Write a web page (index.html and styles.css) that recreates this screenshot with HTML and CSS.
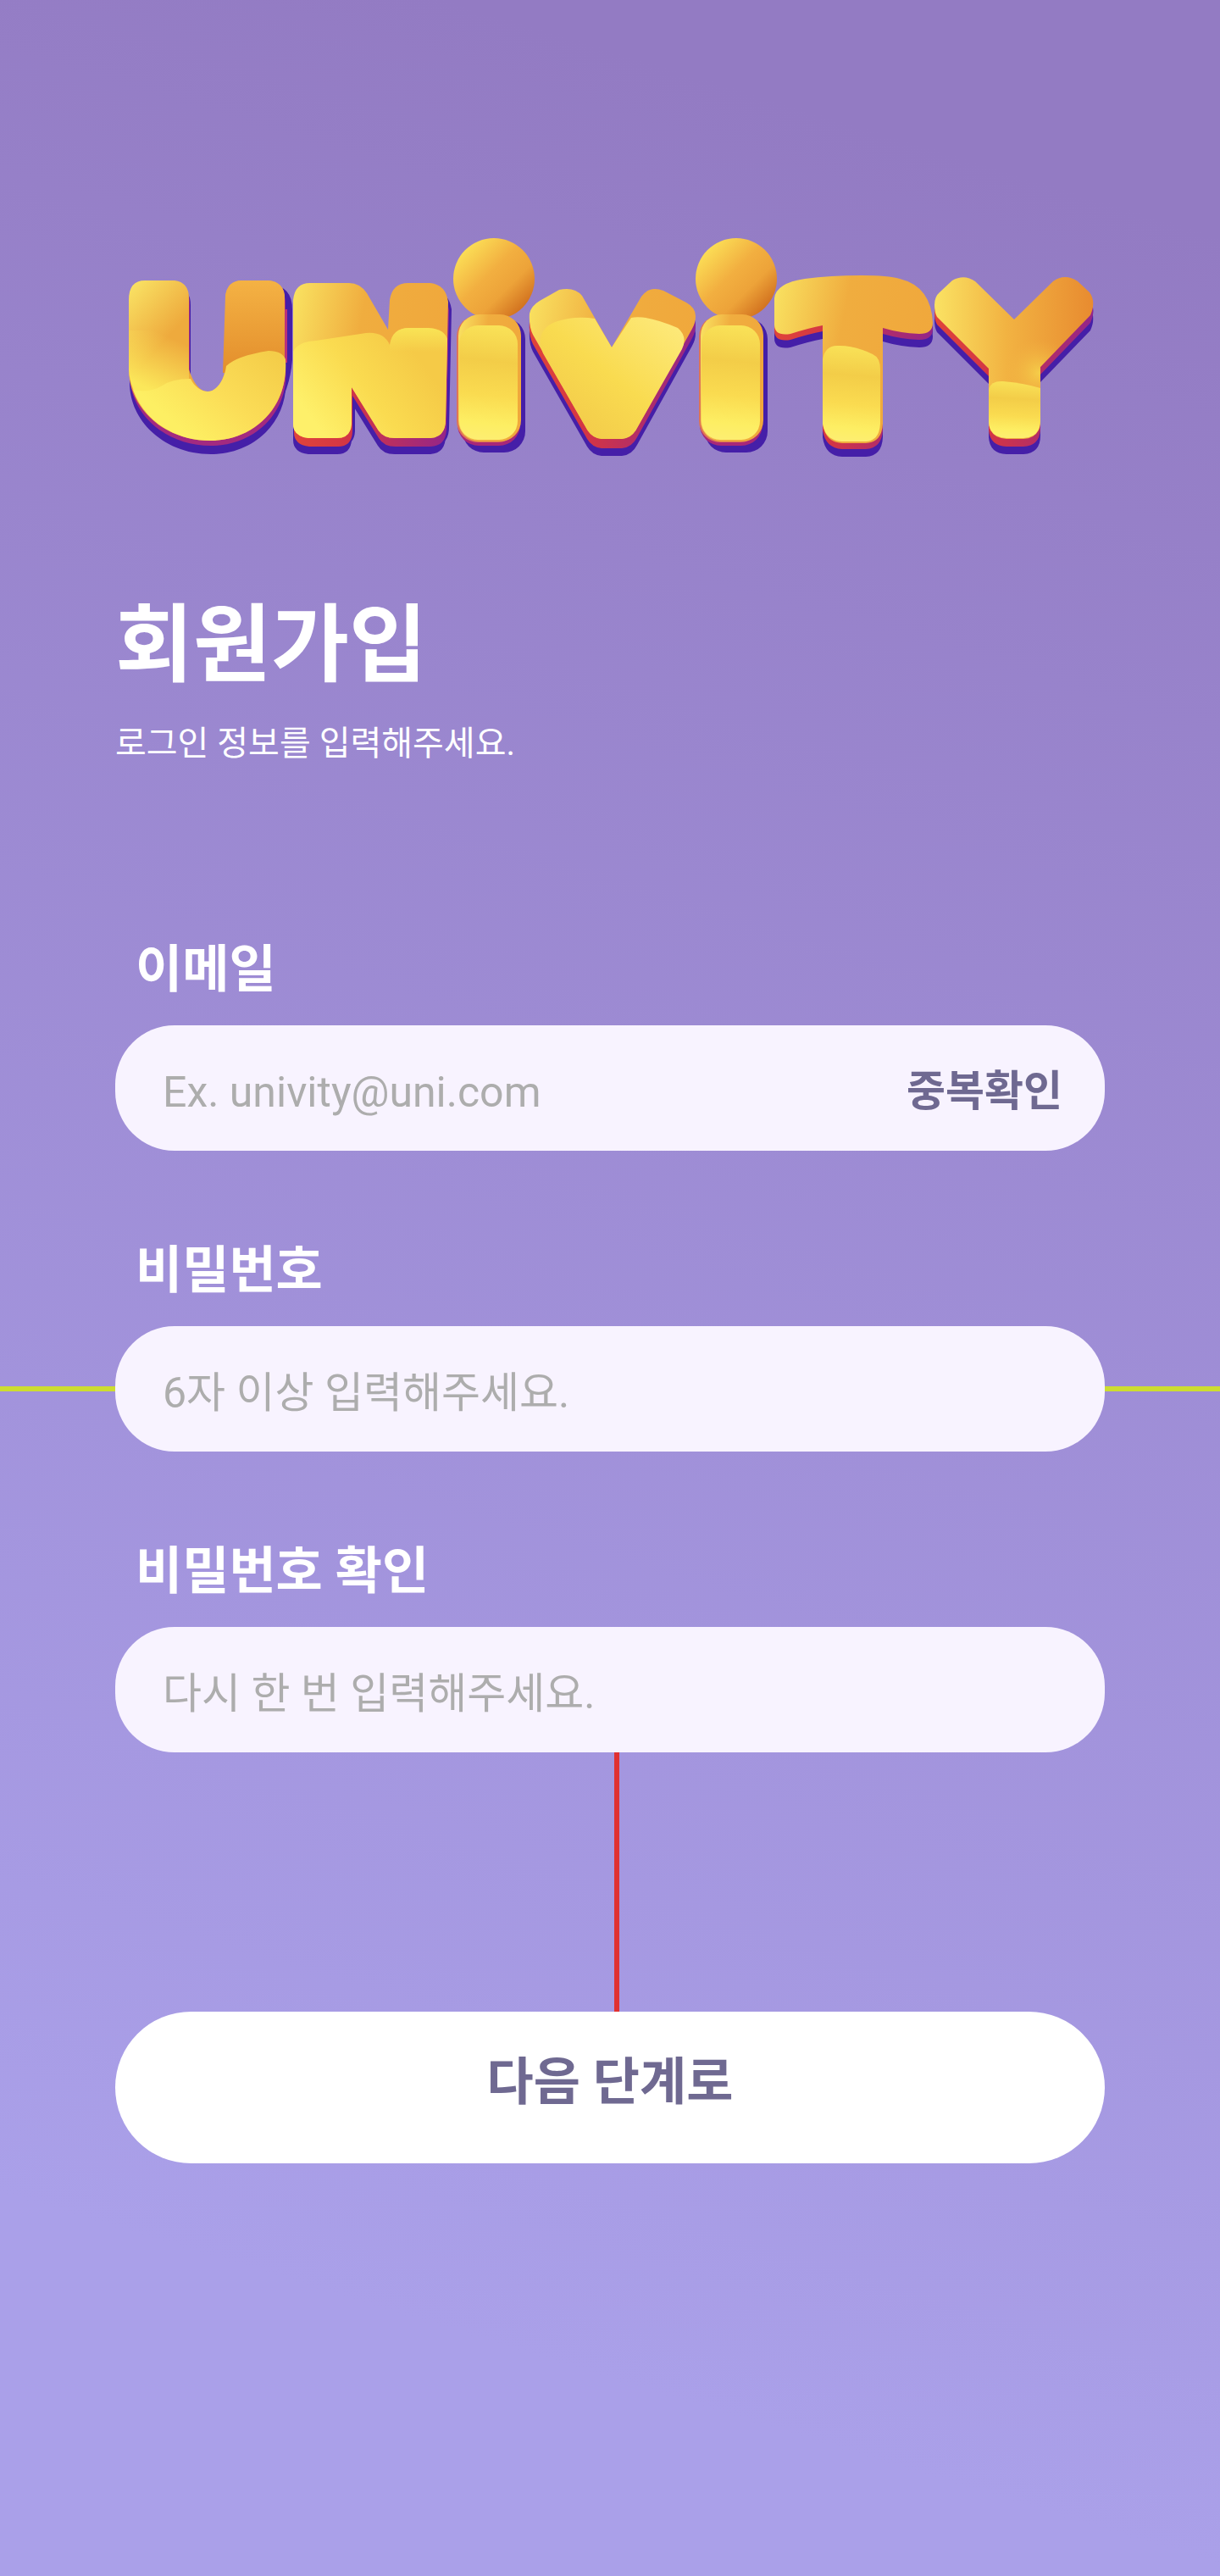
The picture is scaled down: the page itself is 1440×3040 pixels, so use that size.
FILE: index.html
```html
<!DOCTYPE html>
<html lang="ko">
<head>
<meta charset="utf-8">
<meta name="viewport" content="width=device-width, initial-scale=1">
<title>UNIVITY 회원가입</title>
<link rel="stylesheet" href="styles.css">
</head>
<body>
<main class="page">
  <svg class="logo" viewBox="136 280 1168 260" role="img" aria-label="UNIVITY">
    <defs>
      <linearGradient id="body" x1="0" y1="0.1" x2="1" y2="0.3">
        <stop offset="0" stop-color="#f9e160"/><stop offset="0.45" stop-color="#f0ad3f"/><stop offset="1" stop-color="#f0a83c"/>
      </linearGradient>
      <linearGradient id="bodyU" gradientUnits="userSpaceOnUse" x1="155" y1="335" x2="210" y2="385">
        <stop offset="0" stop-color="#f9e264"/><stop offset="1" stop-color="#eeaa3d"/>
      </linearGradient>
      <linearGradient id="stemU" x1="0" y1="0" x2="0" y2="1">
        <stop offset="0" stop-color="#f4b244"/><stop offset="1" stop-color="#e38e2c"/>
      </linearGradient>
      <linearGradient id="bowlU" gradientUnits="userSpaceOnUse" x1="205" y1="400" x2="178" y2="460">
        <stop offset="0" stop-color="#fbe75a" stop-opacity="0"/><stop offset="1" stop-color="#fbe75a"/>
      </linearGradient>
      <linearGradient id="bodyY" x1="0" y1="0.1" x2="1" y2="0.1">
        <stop offset="0" stop-color="#fae263"/><stop offset="0.45" stop-color="#f2b342"/><stop offset="1" stop-color="#e88b30"/>
      </linearGradient>
      <radialGradient id="glowY" gradientUnits="userSpaceOnUse" cx="1226" cy="440" r="40">
        <stop offset="0" stop-color="#f6d14b" stop-opacity="0.9"/><stop offset="1" stop-color="#f2b342" stop-opacity="0"/>
      </radialGradient>
      <linearGradient id="light" x1="0.35" y1="0" x2="0.3" y2="1">
        <stop offset="0" stop-color="#f9e157"/><stop offset="0.3" stop-color="#f3cd48"/><stop offset="0.6" stop-color="#fadb50"/><stop offset="0.85" stop-color="#fdee63"/><stop offset="1" stop-color="#fdee72"/>
      </linearGradient>
      <linearGradient id="lightU" gradientUnits="userSpaceOnUse" x1="320" y1="415" x2="230" y2="520">
        <stop offset="0" stop-color="#f4cd49"/><stop offset="0.55" stop-color="#fbdd57"/><stop offset="1" stop-color="#fdef63"/>
      </linearGradient>
      <linearGradient id="lightN" gradientUnits="userSpaceOnUse" x1="500" y1="430" x2="385" y2="517">
        <stop offset="0" stop-color="#f5ca47"/><stop offset="0.5" stop-color="#fadb50"/><stop offset="1" stop-color="#fef06a"/>
      </linearGradient>
      <linearGradient id="topN" gradientUnits="userSpaceOnUse" x1="490" y1="388" x2="490" y2="415">
        <stop offset="0" stop-color="#f9e355"/><stop offset="1" stop-color="#f9e355" stop-opacity="0"/>
      </linearGradient>
      <linearGradient id="lightV" gradientUnits="userSpaceOnUse" x1="790" y1="375" x2="690" y2="500">
        <stop offset="0" stop-color="#fde97a"/><stop offset="0.6" stop-color="#f9db50"/><stop offset="1" stop-color="#f4ce4b"/>
      </linearGradient>
      <linearGradient id="ball" x1="0.05" y1="0.25" x2="0.75" y2="0.95">
        <stop offset="0" stop-color="#fbdc55"/><stop offset="0.42" stop-color="#f2af40"/><stop offset="0.7" stop-color="#eda339"/><stop offset="1" stop-color="#d37420"/>
      </linearGradient>
      <linearGradient id="rim" x1="0" y1="0" x2="1" y2="0">
        <stop offset="0" stop-color="#e0443a"/><stop offset="0.35" stop-color="#d33545"/><stop offset="1" stop-color="#93258a"/>
      </linearGradient>
      <path id="u" d="M152 354 Q152 331 171 331 H206 Q223 333 223 352 V436 C228 452 236 462 245 462 C257 462 266 448 266 428 V350 Q268 331 286 331 H317 Q336 333 336 352 V428 C341 480 300 520 248 520 C192 520 152 480 152 436Z"/>
      <path id="n" d="M346 354 Q348 334 366 334 H412 Q425 334 433 346 L458 389 L460 354 Q463 334 482 334 H508 Q526 336 529 356 L526 495 Q526 517 506 517 H466 Q452 517 446 507 L415 457 V500 Q414 517 398 517 H364 Q346 515 346 500Z"/>
      <rect id="stem" x="541" y="371" width="74" height="150" rx="25"/>
      <path id="v" d="M625 370 Q627 361 637 355 L660 342 Q678 338 687 349 L722 410 L757 350 Q766 337 783 343 L810 357 Q821 363 821 373 Q821 381 817 388 L752 505 Q746 517 734 518 H710 Q699 517 693 507 L629 395 Q624 385 625 370Z"/>
      <path id="t" d="M914 352 Q916 334 950 329 Q980 325 1017 325 Q1048 325 1062 329 Q1099 338 1101 381 Q1101 394 1085 394 Q1062 393 1042 387 V500 Q1041 522 1022 523 H994 Q974 522 971 500 V384 Q955 387 933 394 Q914 397 914 383Z"/>
      <path id="y" d="M1103 360 Q1103 350 1109 345 L1124 331 Q1138 323 1151 332 L1197 377 L1243 332 Q1257 322 1272 332 L1286 345 Q1294 356 1287 372 L1228 433 V496 Q1228 517 1208 518 H1188 Q1168 517 1167 498 V435 L1106 374 Q1103 369 1103 360Z"/>
      <g id="letter-i">
        <use href="#stem" x="5" y="13" fill="#451fa8"/><use href="#stem" x="5" y="4" fill="#451fa8"/>
        <use href="#stem" x="-1" y="5" fill="#a92878"/>
        <use href="#stem" x="-2" y="1" fill="#df7654"/>
        <circle cx="583" cy="329" r="48" fill="url(#ball)"/>
        <use href="#stem" fill="url(#body)"/>
        <rect x="542" y="384" width="69" height="135" rx="22" fill="url(#light)"/>
      </g>
    </defs>
    <g fill="#451fa8">
      <use href="#u" x="2" y="8"/><use href="#u" x="1" y="16"/>
      <path d="M320 336 Q345 338 345 365 V425 Q342 460 325 485 H300Z"/>
      <use href="#n" x="4" y="9"/><use href="#n" x="0" y="19"/>
      <use href="#v" y="20"/><use href="#v" y="10"/>
      <use href="#t" y="16"/><use href="#t" y="8"/>
      <use href="#y" y="18"/><use href="#y" y="9"/>
    </g>
    <use href="#u" x="1" y="6" fill="#a32a80"/>
    <path d="M330 365 H339 V428 H330Z" fill="#bb3279"/>
    <g fill="url(#rim)">
      <use href="#n" x="1" y="10"/>
      <use href="#v" y="11"/>
      <use href="#t" y="7"/>
      <use href="#y" y="9"/>
    </g>
    <use href="#u" fill="url(#bodyU)"/>
    <path d="M266 350 Q268 331 286 331 H317 Q336 333 336 352 V440 H263Z" fill="url(#stemU)"/>
    <path d="M152 390 H223 V470 H162 Q152 450 152 436Z" fill="url(#bowlU)"/>
    <path d="M190 456 Q202 447 225 447 C229 456 238 462 245 462 C256 462 265 448 267 432 Q279 420 317 414 Q333 414 337 424 C341 480 300 520 248 520 C205 520 170 496 157 460 Q176 464 190 456Z" fill="url(#lightU)"/>
    <use href="#n" fill="url(#body)"/>
    <path d="M346 415 Q352 403 373 402 L432 393 Q453 391 460 407 Q463 387 483 387 H505 Q524 388 528 400 L526 495 Q526 517 506 517 H466 Q452 517 446 507 L415 457 V500 Q414 517 398 517 H364 Q346 515 346 500Z" fill="url(#lightN)"/>
    <path d="M460 407 Q463 387 483 387 H505 Q524 388 528 400 V416 H460Z" fill="url(#topN)"/>
    <use href="#letter-i"/>
    <use href="#v" fill="url(#body)"/>
    <path d="M638 400 Q640 386 655 380 Q678 372 702 376 L722 410 L745 375 Q762 371 800 387 Q812 397 805 412 L752 505 Q746 517 734 518 H710 Q699 517 693 507 L641 417 Q637 408 638 400Z" fill="url(#lightV)"/>
    <use href="#letter-i" x="286"/>
    <use href="#t" fill="url(#body)"/>
    <path d="M971 424 Q974 408 988 408 Q1007 407 1030 418 Q1039 422 1039 436 V500 Q1038 520 1022 521 H994 Q974 520 971 500Z" fill="url(#light)"/>
    <use href="#y" fill="url(#bodyY)"/>
    <path d="M1167 400 H1260 L1228 433 V465 H1167Z" fill="url(#glowY)"/>
    <path d="M1167 459 Q1170 449 1184 450 Q1208 452 1228 458 V496 Q1228 516 1208 517 H1188 Q1168 516 1167 498Z" fill="url(#light)"/>
  </svg>

  <header class="intro">
    <h1 class="title">회원가입</h1>
    <p class="subtitle">로그인 정보를 입력해주세요.</p>
  </header>

  <form class="form">
    <div class="field">
      <label class="label" for="email">이메일</label>
      <div class="control">
        <input class="input" id="email" type="email" placeholder="Ex. univity@uni.com">
        <button class="check" type="button">중복확인</button>
      </div>
    </div>
    <div class="field">
      <label class="label" for="password">비밀번호</label>
      <div class="guide-row">
        <span class="guide-h"></span>
        <div class="control">
          <input class="input" id="password" type="password" placeholder="6자 이상 입력해주세요.">
        </div>
        <span class="guide-h"></span>
      </div>
    </div>
    <div class="field">
      <label class="label" for="confirm">비밀번호 확인</label>
      <div class="control">
        <input class="input" id="confirm" type="password" placeholder="다시 한 번 입력해주세요.">
      </div>
    </div>
    <div class="guide-v"></div>
    <button class="next" type="submit">다음 단계로</button>
  </form>
</main>
</body>
</html>
```
FILE: styles.css
```css
* {
  box-sizing: border-box;
}

body {
  margin: 0;
  font-family: Roboto, "Noto Sans CJK KR", sans-serif;
  color: #fff;
}

.page {
  --gutter: 136px;
  min-height: 100vh;
  padding: 280px var(--gutter);
  background: linear-gradient(197deg, #937bc3 8%, #aaa0e9 87%);
}

.logo {
  display: block;
  width: 100%;
}

.intro {
  margin-top: 172px;
}

.title {
  margin: 0;
  font-size: 100px;
  line-height: 100px;
  font-weight: 700;
}

.subtitle {
  margin: 46px 0 0;
  font-size: 40px;
  line-height: 40px;
}

.form {
  display: flex;
  flex-direction: column;
  margin-top: 217px;
}

.field + .field {
  margin-top: 112px;
}

.label {
  display: block;
  margin-bottom: 35px;
  padding-left: 24px;
  font-size: 60px;
  line-height: 60px;
  font-weight: 700;
}

.control {
  display: flex;
  align-items: center;
  flex: 1;
  min-width: 0;
  height: 148px;
  padding: 0 50px 0 56px;
  border-radius: 70px;
  background: #f8f3ff;
}

.input {
  flex: 1;
  min-width: 0;
  height: 100%;
  padding: 10px 0 0;
  border: 0;
  outline: 0;
  background: transparent;
  font: inherit;
  font-size: 50px;
  line-height: 60px;
  color: #6f6991;
}

.input::placeholder {
  color: #adadad;
  opacity: 1;
}

.check {
  padding: 8px 0 0;
  border: 0;
  background: transparent;
  font: inherit;
  font-size: 50px;
  line-height: 60px;
  font-weight: 700;
  color: #6f6991;
}

.guide-row {
  display: flex;
  align-items: center;
  margin: 0 calc(-1 * var(--gutter));
}

.guide-h {
  flex: 0 0 var(--gutter);
  height: 6px;
  background: #cddc30;
}

.guide-v {
  width: 6px;
  height: 306px;
  margin-left: calc(50% + 5px);
  background: #e03131;
}

.next {
  height: 179px;
  padding: 0 0 12px;
  border: 0;
  border-radius: 90px;
  background: #fff;
  font: inherit;
  font-size: 60px;
  line-height: 60px;
  font-weight: 700;
  color: #6f6991;
}
```
